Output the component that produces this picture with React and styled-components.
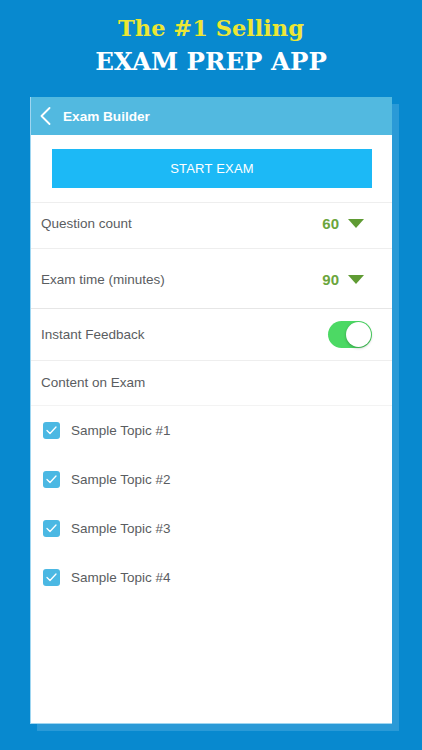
import React from "react";
import styled, { createGlobalStyle } from "styled-components";

const Global = createGlobalStyle`
  html, body { margin: 0; padding: 0; }
  body {
    background: #0889cf;
    width: 422px;
    height: 750px;
    overflow: hidden;
    font-family: "Liberation Sans", Arial, sans-serif;
  }
`;

const Page = styled.div`
  width: 422px;
  height: 750px;
  padding-top: 11px;
  box-sizing: border-box;
  display: flex;
  flex-direction: column;
  align-items: center;
`;

const Headline = styled.div`
  font-family: "DejaVu Serif", "Liberation Serif", serif;
  font-weight: bold;
  text-align: center;
  line-height: 34px;
  color: ${(p) => p.$color};
  font-size: ${(p) => p.$size}px;
  letter-spacing: ${(p) => p.$ls || 0}px;
`;

const Panel = styled.div`
  margin-top: 18px;
  width: 362px;
  height: 627px;
  background: #fff;
  box-shadow: 7px 7px 0 #2a9ad7;
  display: flex;
  flex-direction: column;
  box-sizing: border-box;
  border-left: 1px solid #9fd6f1;
  border-bottom: 1px solid #9fd6f1;
`;

const TopBar = styled.div`
  height: 38px;
  background: #52b9e0;
  display: flex;
  align-items: center;
  padding-left: 9px;
  gap: 12px;
  color: #fff;
  font-weight: bold;
  font-size: 13.6px;
`;

const ButtonWrap = styled.div`
  padding: 14px 20px 14px 21px;
  border-bottom: 1px solid #eeeeee;
`;

const StartButton = styled.button`
  width: 100%;
  height: 39px;
  border: none;
  background: #1cb9f6;
  color: #fff;
  font-family: "Liberation Sans", Arial, sans-serif;
  font-size: 13px;
  letter-spacing: 0.2px;
  padding: 0;
`;

const Row = styled.div`
  height: ${(p) => p.$h}px;
  display: flex;
  align-items: center;
  justify-content: space-between;
  padding: ${(p) => p.$pt || 0}px 20px ${(p) => p.$pb || 0}px 10px;
  box-sizing: border-box;
  border-bottom: 1px solid ${(p) => p.$line || "#eeeeee"};
`;

const Label = styled.span`
  font-size: 13.5px;
  color: #5a5d61;
`;

const Value = styled.div`
  display: flex;
  align-items: center;
  gap: 9px;
  color: #6ba53d;
  font-weight: bold;
  font-size: 15px;
  padding-right: 8px;
`;

const Toggle = styled.div`
  width: 44px;
  height: 27px;
  border-radius: 14px;
  background: #4cd964;
  position: relative;
`;

const Knob = styled.div`
  position: absolute;
  right: 1px;
  top: 1px;
  width: 25px;
  height: 25px;
  border-radius: 50%;
  background: #fff;
  box-shadow: 0 1px 3px rgba(0, 0, 0, 0.3);
`;

const TopicList = styled.div`
  display: flex;
  flex-direction: column;
  padding-top: 7px;
`;

const Topic = styled.div`
  height: 49px;
  display: flex;
  align-items: center;
  padding-left: 12px;
  gap: 11px;
  box-sizing: border-box;
  padding-bottom: 15px;
`;

const Box = styled.div`
  width: 17px;
  height: 17px;
  border-radius: 3px;
  background: #4bb8e3;
  display: flex;
  align-items: center;
  justify-content: center;
`;

const Chevron = () => (
  <svg width="11" height="18" viewBox="0 0 11 18">
    <polyline points="9.5,1 1.5,9 9.5,17" fill="none" stroke="#fff" strokeWidth="1.8" strokeLinecap="round" strokeLinejoin="round" />
  </svg>
);

const Caret = () => (
  <svg width="16" height="9" viewBox="0 0 16 9">
    <polygon points="0,0 16,0 8,9" fill="#5f9b33" />
  </svg>
);

const Check = () => (
  <svg width="11" height="9" viewBox="0 0 11 9">
    <polyline points="1,4.5 4,7.5 10,1" fill="none" stroke="#fff" strokeWidth="1.3" strokeLinecap="round" strokeLinejoin="round" />
  </svg>
);

const topics = ["Sample Topic #1", "Sample Topic #2", "Sample Topic #3", "Sample Topic #4"];

export default function App() {
  return (
    <>
      <Global />
      <Page>
        <Headline $color="#ece735" $size={22.5}>The #1 Selling</Headline>
        <Headline $color="#ffffff" $size={24.5}>EXAM PREP APP</Headline>
        <Panel>
          <TopBar>
            <Chevron />
            <span>Exam Builder</span>
          </TopBar>
          <ButtonWrap>
            <StartButton>START EXAM</StartButton>
          </ButtonWrap>
          <Row $h={46} $pb={4}>
            <Label>Question count</Label>
            <Value>60 <Caret /></Value>
          </Row>
          <Row $h={60} $pt={2} $line="#e6e6e6">
            <Label>Exam time (minutes)</Label>
            <Value>90 <Caret /></Value>
          </Row>
          <Row $h={52}>
            <Label>Instant Feedback</Label>
            <Toggle><Knob /></Toggle>
          </Row>
          <Row $h={45} $pb={2} $line="#f3f3f3">
            <Label>Content on Exam</Label>
          </Row>
          <TopicList>
            {topics.map((t) => (
              <Topic key={t}>
                <Box><Check /></Box>
                <Label>{t}</Label>
              </Topic>
            ))}
          </TopicList>
        </Panel>
      </Page>
    </>
  );
}
